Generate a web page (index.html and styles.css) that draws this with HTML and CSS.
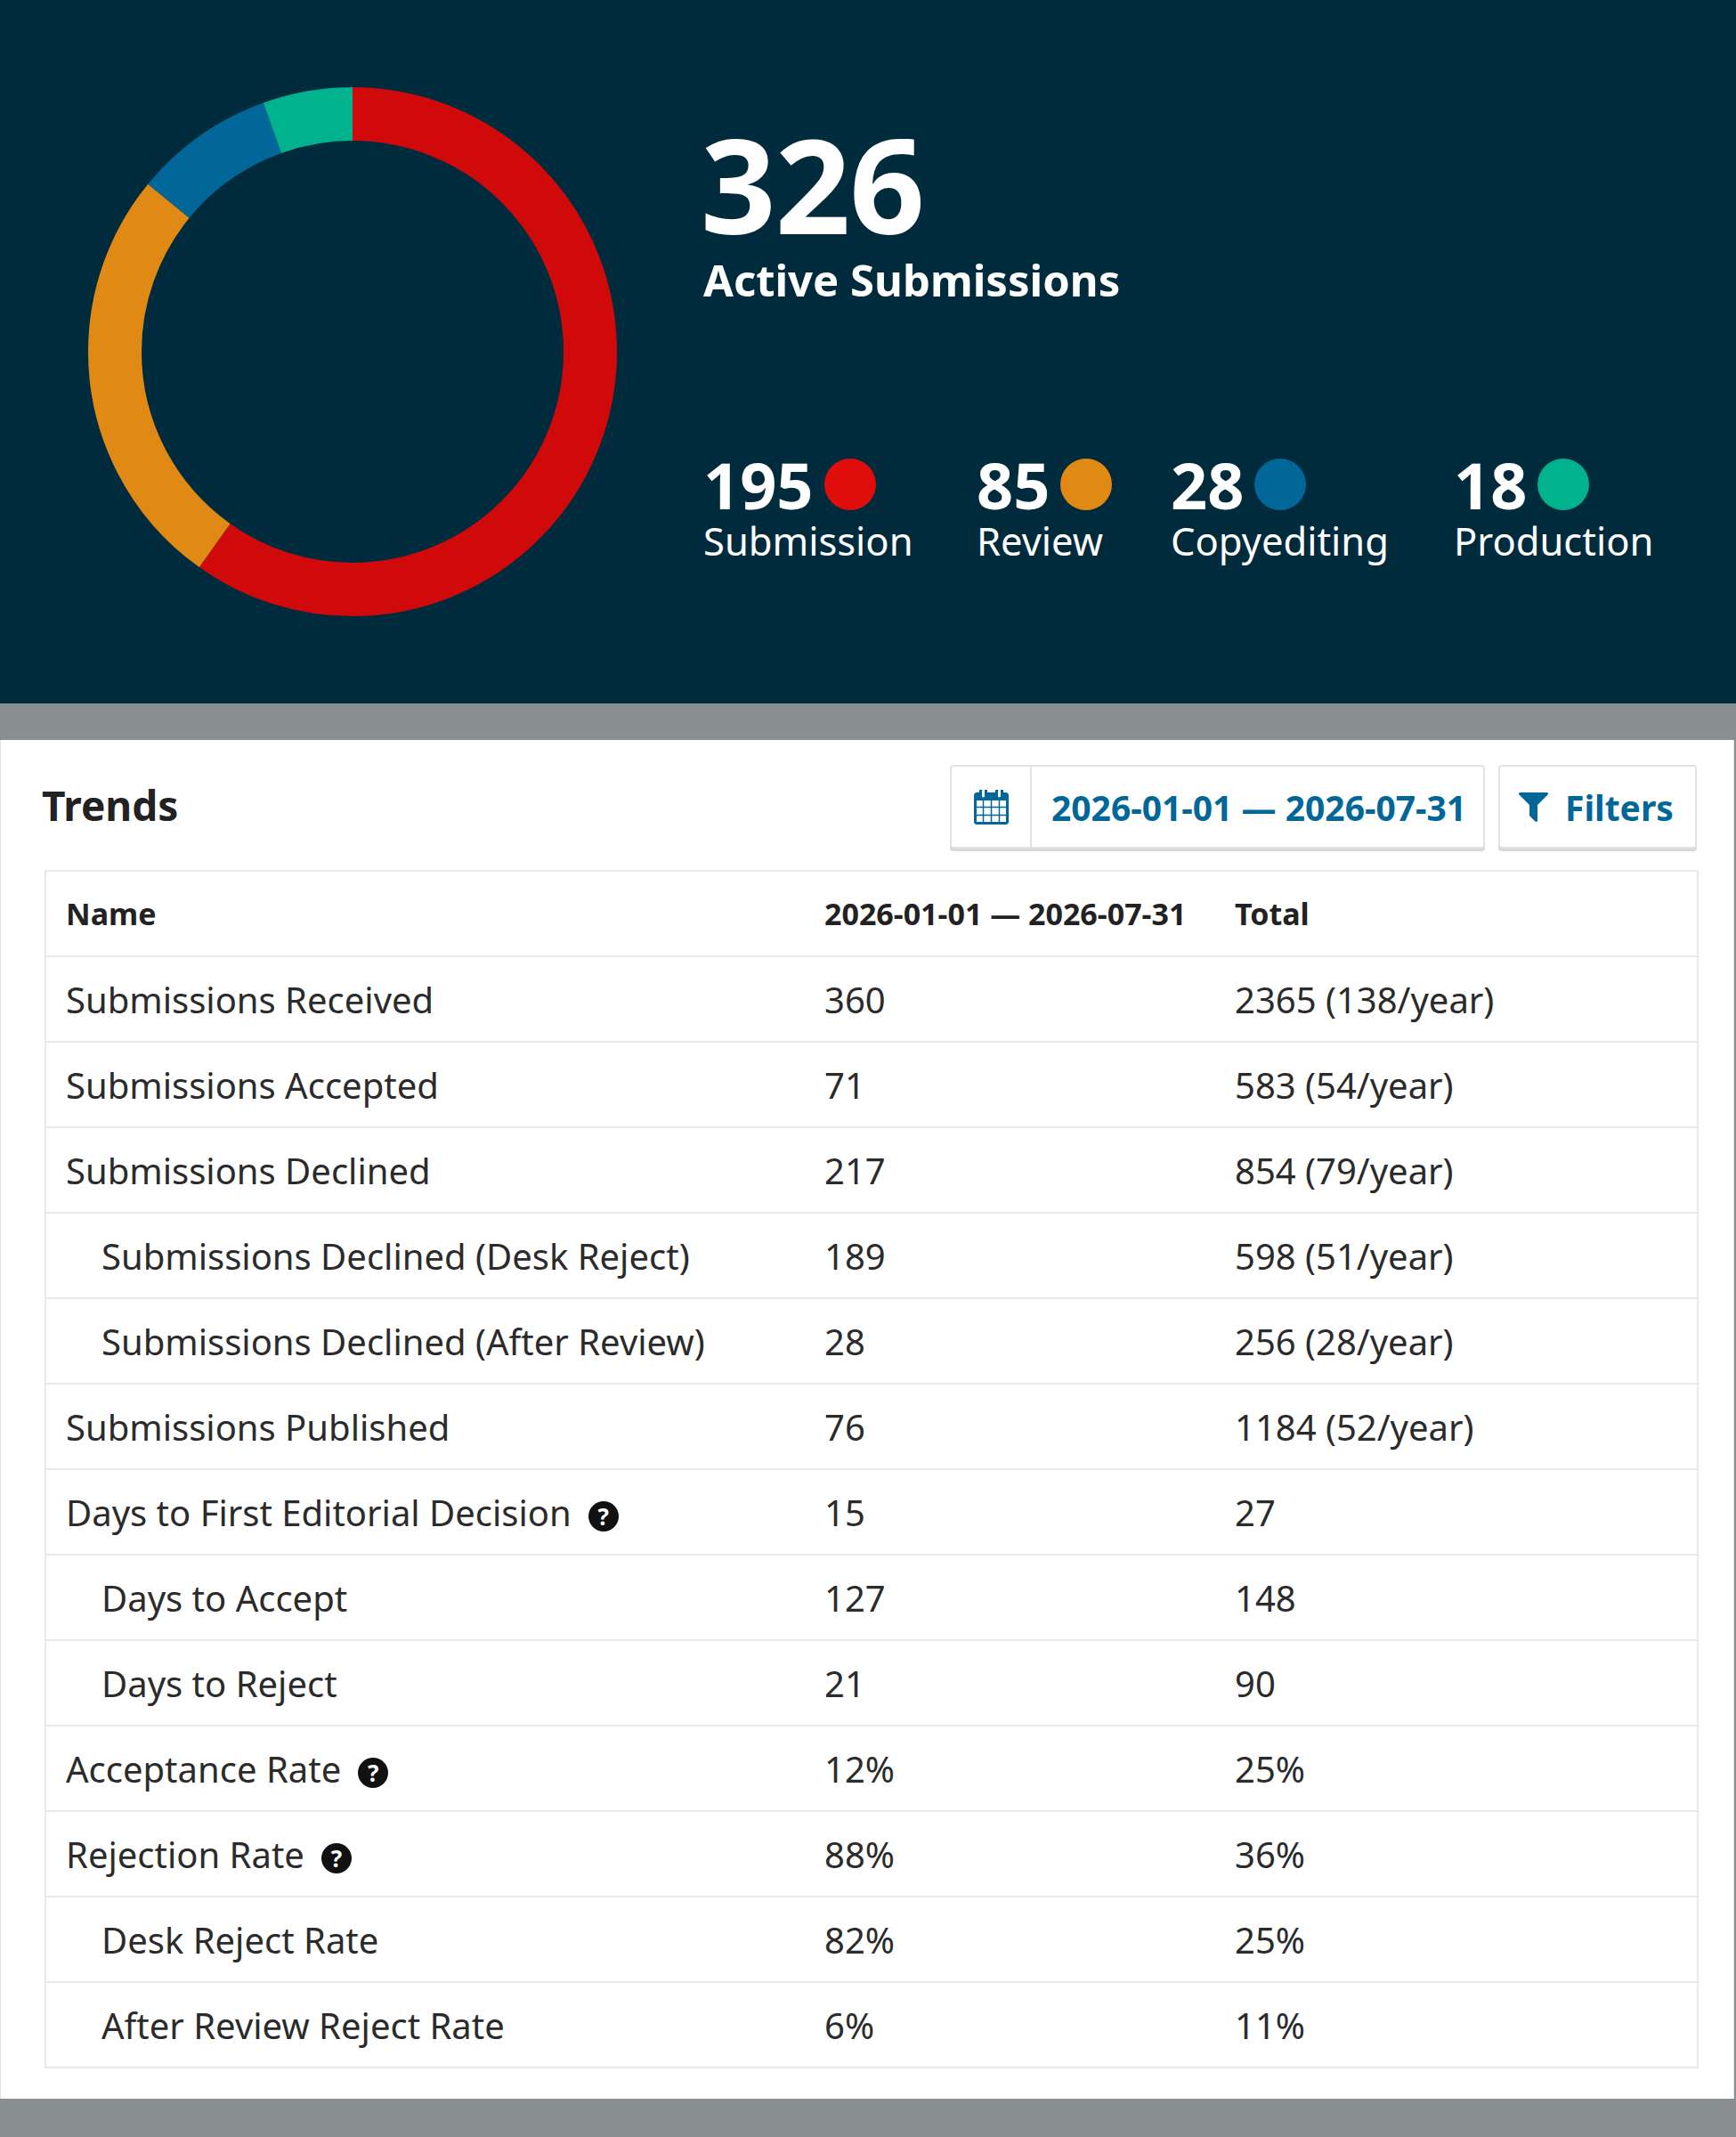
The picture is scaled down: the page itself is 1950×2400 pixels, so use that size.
FILE: index.html
```html
<!DOCTYPE html>
<html lang="en">
<head>
<meta charset="utf-8">
<title>Statistics</title>
<link rel="stylesheet" href="styles.css">
</head>
<body>
<section class="summary">
  <div class="donut">
    <svg width="594" height="594" viewBox="0 0 594 594">
      <g transform="rotate(-90 297 297)" fill="none" stroke-width="60">
        <circle cx="297" cy="297" r="267" stroke="#d00a0a" stroke-dasharray="1003.48 1677.61" stroke-dashoffset="0"/>
        <circle cx="297" cy="297" r="267" stroke="#e08914" stroke-dasharray="437.41 1677.61" stroke-dashoffset="-1003.48"/>
        <circle cx="297" cy="297" r="267" stroke="#006798" stroke-dasharray="144.09 1677.61" stroke-dashoffset="-1440.89"/>
        <circle cx="297" cy="297" r="267" stroke="#00b28d" stroke-dasharray="92.63 1677.61" stroke-dashoffset="-1584.98"/>
      </g>
    </svg>
  </div>
  <div class="summary-text">
    <div class="total">326</div>
    <div class="total-label">Active Submissions</div>
    <div class="stages">
      <div class="stage">
        <div class="stage-count">195<span class="dot dot--submission"></span></div>
        <div class="stage-label">Submission</div>
      </div>
      <div class="stage">
        <div class="stage-count">85<span class="dot dot--review"></span></div>
        <div class="stage-label">Review</div>
      </div>
      <div class="stage">
        <div class="stage-count">28<span class="dot dot--copyediting"></span></div>
        <div class="stage-label">Copyediting</div>
      </div>
      <div class="stage">
        <div class="stage-count">18<span class="dot dot--production"></span></div>
        <div class="stage-label">Production</div>
      </div>
    </div>
  </div>
</section>

<section class="panel">
  <header class="panel-header">
    <h2 class="panel-title">Trends</h2>
    <div class="actions">
      <div class="btn btn--date">
        <span class="btn-icon-cell">
          <svg class="icon-calendar" viewBox="0 128 1664 1664" width="39" height="39"><path fill="currentColor" d="M128 1664h288v-288h-288v288zm352 0h320v-288h-320v288zm-352-352h288v-320h-288v320zm352 0h320v-320h-320v320zm-352-384h288v-288h-288v288zm736 736h320v-288h-320v288zm-384-736h320v-288h-320v288zm768 736h288v-288h-288v288zm-384-352h320v-320h-320v320zm-352-864v-288q0-13-9.5-22.5t-22.5-9.5h-64q-13 0-22.5 9.5t-9.5 22.5v288q0 13 9.5 22.5t22.5 9.5h64q13 0 22.5-9.5t9.5-22.5zm736 864h288v-320h-288v320zm-384-384h320v-288h-320v288zm384 0h288v-288h-288v288zm32-480v-288q0-13-9.5-22.5t-22.5-9.5h-64q-13 0-22.5 9.5t-9.5 22.5v288q0 13 9.5 22.5t22.5 9.5h64q13 0 22.5-9.5t9.5-22.5zm384-64v1280q0 52-38 90t-90 38h-1408q-52 0-90-38t-38-90v-1280q0-52 38-90t90-38h128v-96q0-66 47-113t113-47h64q66 0 113 47t47 113v96h384v-96q0-66 47-113t113-47h64q66 0 113 47t47 113v96h128q52 0 90 38t38 90z"/></svg>
        </span>
        <span class="btn-text">2026-01-01 — 2026-07-31</span>
      </div>
      <div class="btn btn--filter">
        <svg class="icon-filter" viewBox="0 256 1408 1408" width="33" height="33"><path fill="currentColor" d="M1403 295q17 41-14 70l-493 493v742q0 42-39 59-13 5-25 5-27 0-45-19l-256-256q-19-19-19-45v-486l-493-493q-31-29-14-70 17-39 59-39h1280q42 0 59 39z"/></svg>
        <span class="btn-label">Filters</span>
      </div>
    </div>
  </header>

  <table class="stats-table">
    <colgroup>
      <col class="col-name">
      <col class="col-range">
      <col class="col-total">
    </colgroup>
    <thead>
      <tr><th>Name</th><th>2026-01-01 — 2026-07-31</th><th>Total</th></tr>
    </thead>
    <tbody>
      <tr><td>Submissions Received</td><td>360</td><td>2365 (138/year)</td></tr>
      <tr><td>Submissions Accepted</td><td>71</td><td>583 (54/year)</td></tr>
      <tr><td>Submissions Declined</td><td>217</td><td>854 (79/year)</td></tr>
      <tr class="sub"><td>Submissions Declined (Desk Reject)</td><td>189</td><td>598 (51/year)</td></tr>
      <tr class="sub"><td>Submissions Declined (After Review)</td><td>28</td><td>256 (28/year)</td></tr>
      <tr><td>Submissions Published</td><td>76</td><td>1184 (52/year)</td></tr>
      <tr><td>Days to First Editorial Decision<span class="help">?</span></td><td>15</td><td>27</td></tr>
      <tr class="sub"><td>Days to Accept</td><td>127</td><td>148</td></tr>
      <tr class="sub"><td>Days to Reject</td><td>21</td><td>90</td></tr>
      <tr><td>Acceptance Rate<span class="help">?</span></td><td>12%</td><td>25%</td></tr>
      <tr><td>Rejection Rate<span class="help">?</span></td><td>88%</td><td>36%</td></tr>
      <tr class="sub"><td>Desk Reject Rate</td><td>82%</td><td>25%</td></tr>
      <tr class="sub"><td>After Review Reject Rate</td><td>6%</td><td>11%</td></tr>
    </tbody>
  </table>
</section>
</body>
</html>
```

FILE: styles.css
```css
html, body {
  margin: 0;
  padding: 0;
}

body {
  width: 1950px;
  min-height: 2400px;
  background: #898f91;
  font-family: "Noto Sans", "Open Sans", sans-serif;
  color: #222;
}

/* ---------- summary ---------- */
.summary {
  box-sizing: border-box;
  height: 790px;
  background: #002b3d;
  display: flex;
  padding: 98px 0 0 99px;
}

.donut {
  flex: none;
  width: 594px;
  height: 594px;
}

.donut svg {
  display: block;
}

.summary-text {
  margin-left: 97px;
  padding-top: 32px;
  color: #fff;
}

.total {
  font-size: 148px;
  line-height: 152px;
  font-weight: 700;
  margin-left: -3px;
  letter-spacing: -1px;
}

.total-label {
  font-size: 49px;
  line-height: 60px;
  font-weight: 700;
  margin-top: 2px;
}

.stages {
  display: grid;
  grid-template-columns: 307px 218px 318px auto;
  margin-top: 164px;
}

.stage-count {
  display: flex;
  align-items: center;
  font-size: 72px;
  line-height: 72px;
  font-weight: 700;
}

.dot {
  width: 58px;
  height: 58px;
  border-radius: 50%;
  margin-left: 12px;
}

.dot--submission { background: #e00d0d; }
.dot--review { background: #e08914; }
.dot--copyediting { background: #006798; }
.dot--production { background: #00b28d; }

.stage-label {
  font-size: 43.5px;
  line-height: 50px;
  margin-top: 2px;
}

/* ---------- panel ---------- */
.panel {
  box-sizing: border-box;
  width: 1948px;
  margin-top: 41px;
  background: #fff;
  border-left: 1px solid #e2e2e2;
  border-right: 1px solid #e2e2e2;
  padding: 0 41px 34px 46px;
}

.panel-header {
  height: 146px;
  display: flex;
  align-items: center;
  justify-content: space-between;
}

.panel-title {
  margin: 0;
  font-size: 46px;
  line-height: 1;
  font-weight: 700;
  color: #222;
}

.actions {
  display: flex;
  gap: 15px;
  margin-top: 4px;
}

.btn {
  box-sizing: border-box;
  height: 94px;
  display: flex;
  align-items: center;
  background: #fff;
  border: 2px solid #e2e2e2;
  border-radius: 4px;
  box-shadow: 0 3px 0 #d8d8d8;
  color: #006798;
  font-size: 39px;
  font-weight: 700;
}

.btn--date {
  width: 601px;
}

.btn-icon-cell {
  flex: none;
  width: 88px;
  height: 100%;
  display: flex;
  align-items: center;
  justify-content: center;
  border-right: 2px solid #e2e2e2;
}

.btn-text {
  padding-left: 22px;
  white-space: nowrap;
}

.btn--filter {
  width: 223px;
  padding-left: 21px;
}

.icon-filter {
  flex: none;
  display: block;
}

.icon-calendar {
  display: block;
}

.btn-label {
  margin-left: 19px;
}

/* ---------- table ---------- */
.stats-table {
  margin-left: 3px;
  width: 1856px;
  table-layout: fixed;
  border-collapse: collapse;
  border: 2px solid #e8e8e8;
}

.col-name { width: 853px; }
.col-range { width: 461px; }
.col-total { width: 542px; }

.stats-table th,
.stats-table td {
  height: 94px;
  padding: 0 22px;
  text-align: left;
  border-bottom: 2px solid #e8e8e8;
  white-space: nowrap;
}

.stats-table th {
  font-size: 34px;
  font-weight: 700;
  color: #222;
}

.stats-table td {
  font-size: 40px;
  font-weight: 400;
  color: #2b2b2b;
}

.stats-table tr.sub td:first-child {
  padding-left: 62px;
}

.help {
  display: inline-flex;
  align-items: center;
  justify-content: center;
  width: 34px;
  height: 34px;
  margin-left: 19px;
  border-radius: 50%;
  background: #111;
  color: #fff;
  font-size: 26px;
  font-weight: 700;
  line-height: 1;
  vertical-align: 1px;
}
```
